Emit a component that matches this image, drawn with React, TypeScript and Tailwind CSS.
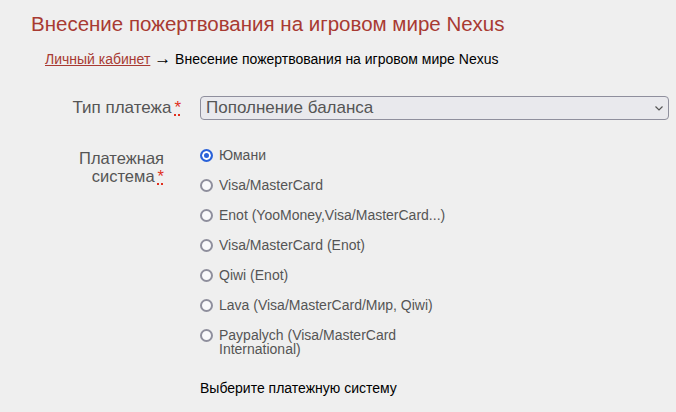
import React from 'react';

const systems = [
  'Юмани',
  'Visa/MasterCard',
  'Enot (YooMoney,Visa/MasterCard...)',
  'Visa/MasterCard (Enot)',
  'Qiwi (Enot)',
  'Lava (Visa/MasterCard/Мир, Qiwi)',
  'Paypalych (Visa/MasterCard International)',
];

const Req: React.FC = () => (
  <abbr
    title="обязательное поле"
    className="ml-[3px] text-[#e0301e] underline decoration-dotted decoration-2 underline-offset-[1px]"
  >
    *
  </abbr>
);

export default function App() {
  const [selected, setSelected] = React.useState(0);

  return (
    <div className="min-h-[412px] bg-[#efefef] font-['Liberation_Sans',Arial,sans-serif] pt-[11px] pl-[31px] pr-[7px]">
      <h1 className="text-[20.5px] leading-[25px] text-[#a83a32]">
        Внесение пожертвования на игровом мире Nexus
      </h1>

      <div className="mt-[15px] pl-[14px] text-[14px] leading-[16px] text-black">
        <a href="#" className="text-[#a83a32] underline">
          Личный кабинет
        </a>{' '}
        <span className="text-[17px] leading-[16px]">→</span> Внесение пожертвования на игровом мире Nexus
      </div>

      <form className="mt-[29px]">
        <div className="flex items-center">
          <label className="w-[150px] text-right text-[17px] leading-[18px] text-[#555] whitespace-nowrap">
            Тип платежа
            <Req />
          </label>
          <div className="relative ml-[19px] flex-1">
            <select className="w-full h-[24px] appearance-none rounded-[4px] border border-[#8f8f9d] bg-[#e9e9ed] pl-[5px] text-[17px] leading-[18px] text-[#555] outline-none">
              <option>Пополнение баланса</option>
            </select>
            <svg
              className="pointer-events-none absolute right-[6px] top-[10px]"
              width="8"
              height="5"
              viewBox="0 0 8 5"
              fill="none"
            >
              <path d="M0.5 0.5l3.5 3.5 3.5-3.5" stroke="#555" strokeWidth="1.2" />
            </svg>
          </div>
        </div>

        <div className="mt-[28px] flex items-start">
          <label className="w-[133px] pt-[1px] text-right text-[16.5px] leading-[18px] text-[#555]">
            Платежная система
            <Req />
          </label>
          <div className="ml-[36px] flex flex-col gap-[16px]">
            {systems.map((s, i) => (
              <label key={s} className="flex items-start gap-[6px] text-[14px] leading-[14px] text-[#555] cursor-pointer">
                <input
                  type="radio"
                  name="system"
                  checked={selected === i}
                  onChange={() => setSelected(i)}
                  className="m-0 mt-[1px] shrink-0 appearance-none w-[13px] h-[13px] rounded-full border-2 border-[#8f8f9d] bg-[#f9f9fb] checked:border-[#2a62d9] checked:bg-[#2a62d9] checked:shadow-[inset_0_0_0_2px_white]"
                />
                <span className="max-w-[240px]">{s}</span>
              </label>
            ))}
            <div className="mt-[8px] text-[14px] leading-[16px] text-black">
              Выберите платежную систему
            </div>
          </div>
        </div>
      </form>
    </div>
  );
}
